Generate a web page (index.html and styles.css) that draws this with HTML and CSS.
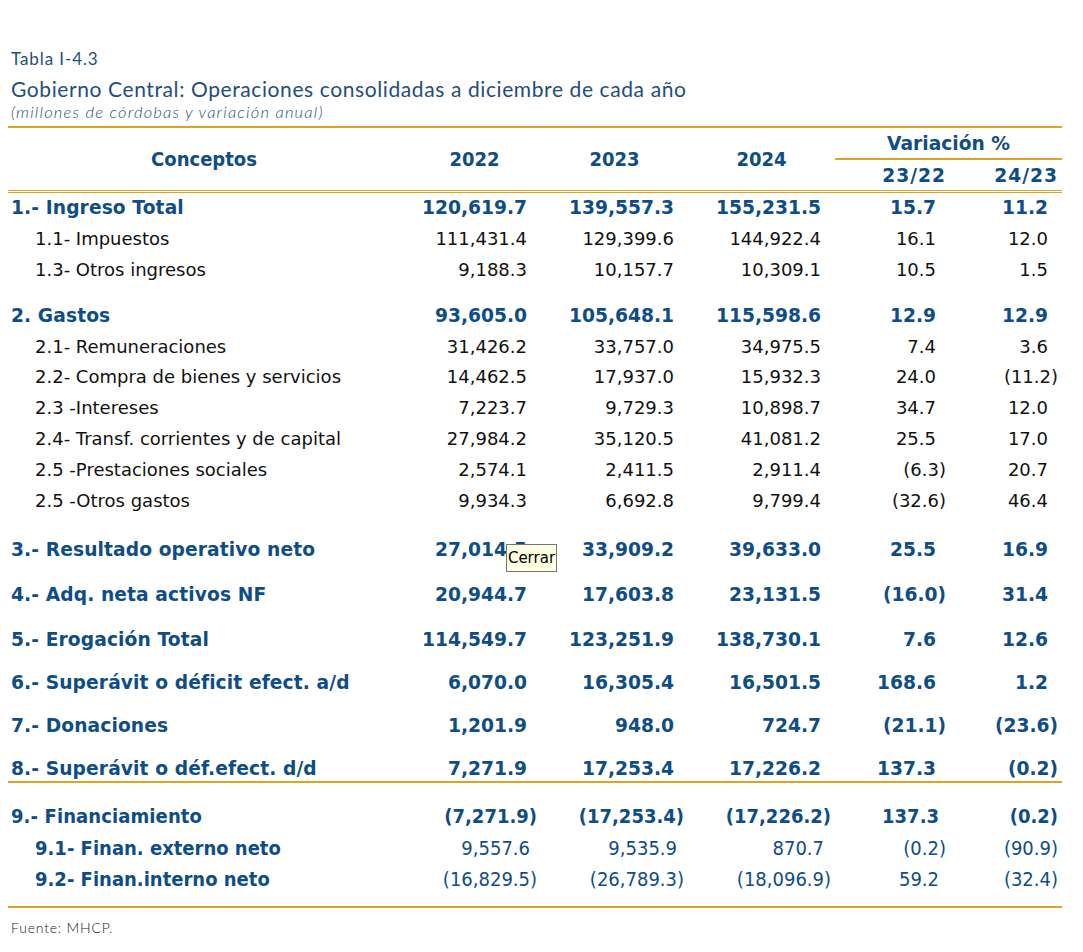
FILE: index.html
```html
<!DOCTYPE html>
<html lang="es">
<head>
<meta charset="utf-8">
<title>Tabla I-4.3</title>
<link rel="stylesheet" href="styles.css">
</head>
<body>
<div class="page">
  <div class="caption">
    <div class="tabnum">Tabla I-4.3</div>
    <div class="title">Gobierno Central: Operaciones consolidadas a diciembre de cada año</div>
    <div class="subtitle">(millones de córdobas y variación anual)</div>
  </div>
  <table class="ops">
    <colgroup>
      <col class="c-label"><col class="c-y1"><col class="c-y"><col class="c-y"><col class="c-v1"><col class="c-v2">
    </colgroup>
    <thead>
      <tr class="h1">
        <th rowspan="2" class="hc">Conceptos</th>
        <th rowspan="2" class="hc">2022</th>
        <th rowspan="2" class="hc">2023</th>
        <th rowspan="2" class="hc">2024</th>
        <th colspan="2" class="var">Variación %</th>
      </tr>
      <tr class="h2">
        <th class="sub">23/22</th>
        <th class="sub">24/23</th>
      </tr>
    </thead>
    <tbody>
      <tr class="r b"><td class="l">1.- Ingreso Total</td><td class="p">120,619.7</td><td class="p">139,557.3</td><td class="p">155,231.5</td><td class="p">15.7</td><td class="p">11.2</td></tr>
      <tr class="r"><td class="l s">1.1- Impuestos</td><td class="p">111,431.4</td><td class="p">129,399.6</td><td class="p">144,922.4</td><td class="p">16.1</td><td class="p">12.0</td></tr>
      <tr class="r"><td class="l s">1.3- Otros ingresos</td><td class="p">9,188.3</td><td class="p">10,157.7</td><td class="p">10,309.1</td><td class="p">10.5</td><td class="p">1.5</td></tr>
      <tr class="gap g15"><td colspan="6"></td></tr>
      <tr class="r b"><td class="l">2. Gastos</td><td class="p">93,605.0</td><td class="p">105,648.1</td><td class="p">115,598.6</td><td class="p">12.9</td><td class="p">12.9</td></tr>
      <tr class="r"><td class="l s">2.1- Remuneraciones</td><td class="p">31,426.2</td><td class="p">33,757.0</td><td class="p">34,975.5</td><td class="p">7.4</td><td class="p">3.6</td></tr>
      <tr class="r"><td class="l s">2.2- Compra de bienes y servicios</td><td class="p">14,462.5</td><td class="p">17,937.0</td><td class="p">15,932.3</td><td class="p">24.0</td><td>(11.2)</td></tr>
      <tr class="r"><td class="l s">2.3 -Intereses</td><td class="p">7,223.7</td><td class="p">9,729.3</td><td class="p">10,898.7</td><td class="p">34.7</td><td class="p">12.0</td></tr>
      <tr class="r"><td class="l s">2.4- Transf. corrientes y de capital</td><td class="p">27,984.2</td><td class="p">35,120.5</td><td class="p">41,081.2</td><td class="p">25.5</td><td class="p">17.0</td></tr>
      <tr class="r"><td class="l s">2.5 -Prestaciones sociales</td><td class="p">2,574.1</td><td class="p">2,411.5</td><td class="p">2,911.4</td><td>(6.3)</td><td class="p">20.7</td></tr>
      <tr class="r"><td class="l s">2.5 -Otros gastos</td><td class="p">9,934.3</td><td class="p">6,692.8</td><td class="p">9,799.4</td><td>(32.6)</td><td class="p">46.4</td></tr>
      <tr class="gap g19"><td colspan="6"></td></tr>
      <tr class="r b"><td class="l">3.- Resultado operativo neto</td><td class="p">27,014.5</td><td class="p">33,909.2</td><td class="p">39,633.0</td><td class="p">25.5</td><td class="p">16.9</td></tr>
      <tr class="gap g14"><td colspan="6"></td></tr>
      <tr class="r b"><td class="l">4.- Adq. neta activos NF</td><td class="p">20,944.7</td><td class="p">17,603.8</td><td class="p">23,131.5</td><td>(16.0)</td><td class="p">31.4</td></tr>
      <tr class="gap g14"><td colspan="6"></td></tr>
      <tr class="r b"><td class="l">5.- Erogación Total</td><td class="p">114,549.7</td><td class="p">123,251.9</td><td class="p">138,730.1</td><td class="p">7.6</td><td class="p">12.6</td></tr>
      <tr class="gap g12"><td colspan="6"></td></tr>
      <tr class="r b"><td class="l">6.- Superávit o déficit efect. a/d</td><td class="p">6,070.0</td><td class="p">16,305.4</td><td class="p">16,501.5</td><td class="p">168.6</td><td class="p">1.2</td></tr>
      <tr class="gap g12"><td colspan="6"></td></tr>
      <tr class="r b"><td class="l">7.- Donaciones</td><td class="p">1,201.9</td><td class="p">948.0</td><td class="p">724.7</td><td>(21.1)</td><td>(23.6)</td></tr>
      <tr class="gap g12"><td colspan="6"></td></tr>
      <tr class="r b rule r8"><td class="l">8.- Superávit o déf.efect. d/d</td><td class="p">7,271.9</td><td class="p">17,253.4</td><td class="p">17,226.2</td><td class="p">137.3</td><td>(0.2)</td></tr>
      <tr class="gap g17"><td colspan="6"></td></tr>
      <tr class="r n b r9"><td class="l">9.- Financiamiento</td><td>(7,271.9)</td><td>(17,253.4)</td><td>(17,226.2)</td><td class="p">137.3</td><td>(0.2)</td></tr>
      <tr class="r n"><td class="l s lb">9.1- Finan. externo neto</td><td class="p">9,557.6</td><td class="p">9,535.9</td><td class="p">870.7</td><td>(0.2)</td><td>(90.9)</td></tr>
      <tr class="r n"><td class="l s lb">9.2- Finan.interno neto</td><td>(16,829.5)</td><td>(26,789.3)</td><td>(18,096.9)</td><td class="p">59.2</td><td>(32.4)</td></tr>
      <tr class="gap g11 rule"><td colspan="6"></td></tr>
    </tbody>
  </table>
  <div class="source">Fuente: MHCP.</div>
  <div class="tip">Cerrar</div>
</div>
</body>
</html>
```
FILE: styles.css
```css
html, body {
  margin: 0;
  padding: 0;
  background: #ffffff;
}
.page {
  position: relative;
  width: 1054px;
  padding: 48px 21px 0 8px;
}
.caption {
  padding-left: 3px;
  color: #1f4e79;
  font-family: Lato, "Open Sans", sans-serif;
}
.tabnum {
  font-size: 17px;
  line-height: 22px;
  letter-spacing: 0.9px;
}
.title {
  margin-top: 6px;
  font-size: 21px;
  line-height: 26px;
  letter-spacing: 0.6px;
}
.subtitle {
  font-size: 16.5px;
  line-height: 20px;
  font-style: italic;
  font-weight: 300;
  letter-spacing: 1.2px;
  color: #2a4f7a;
}
.ops {
  margin-top: 4px;
  width: 1054px;
  border-collapse: separate;
  border-spacing: 0;
  table-layout: fixed;
  font-family: "DejaVu Sans", Verdana, sans-serif;
  font-size: 18px;
  color: #111111;
}
.c-label { width: 392px; }
.c-y1 { width: 141px; }
.c-y { width: 147px; }
.c-v1 { width: 115px; }
.c-v2 { width: 112px; }
.ops th {
  color: #0e4d85;
  padding: 0 4px 0 0;
  border-top: 2px solid #dba521;
  font-weight: bold;
}
.ops .hc {
  height: 62px;
  text-align: center;
  padding: 0;
  font-family: "DejaVu Sans Condensed", "DejaVu Sans", sans-serif;
  font-stretch: condensed;
  font-size: 20px;
  border-bottom: 3px double #dba521;
}
.ops th:nth-child(2).hc { padding-left: 8px; }
.ops .var {
  height: 29px;
  text-align: center;
  font-size: 18.67px;
  border-bottom: 2px solid #dba521;
  padding: 0;
}
.ops .sub {
  border-top: none;
  height: 29px;
  text-align: right;
  font-size: 18.67px;
  letter-spacing: 1px;
  padding-right: 4px;
  border-bottom: 3px double #dba521;
}
.ops td {
  padding: 0 4px 0 0;
  text-align: right;
  white-space: nowrap;
  height: 30.8px;
  line-height: 22px;
}
.ops td.p { padding-right: 14px; }
.ops td.l {
  text-align: left;
  padding-left: 3px;
}
.ops td.s { padding-left: 27px; }
.r.b td {
  font-weight: bold;
  color: #0e4d85;
  font-size: 18.67px;
}
.r.b td.l { letter-spacing: 0.1px; }
.r.n td {
  font-family: "DejaVu Sans Condensed", "DejaVu Sans", sans-serif;
  font-stretch: condensed;
  color: #0e4d85;
  font-size: 20px;
}
.r.n td.p { padding-right: 11px; }
.r.n td.lb { font-weight: bold; }
.r8 td {
  height: 28px;
  line-height: 24px;
  vertical-align: bottom;
}
.r9 td { height: 33px; }
.gap td { padding: 0; line-height: 0; }
.g11 td { height: 11px; }
.g12 td { height: 12px; }
.g14 td { height: 14px; }
.g15 td { height: 15px; }
.g17 td { height: 17px; }
.g19 td { height: 19px; }
.rule td { border-bottom: 2px solid #dba521; }
.source {
  margin-top: 11px;
  padding-left: 3px;
  font-family: Lato, "Open Sans", sans-serif;
  font-weight: 300;
  font-size: 14px;
  letter-spacing: 0.8px;
  color: #222222;
}
.tip {
  position: absolute;
  left: 506px;
  top: 544px;
  width: 49px;
  height: 26px;
  box-sizing: content-box;
  background: #ffffe1;
  border: 1px solid #767676;
  font-family: "DejaVu Sans", Tahoma, sans-serif;
  font-size: 15px;
  line-height: 26px;
  color: #000000;
  text-align: center;
}
```
